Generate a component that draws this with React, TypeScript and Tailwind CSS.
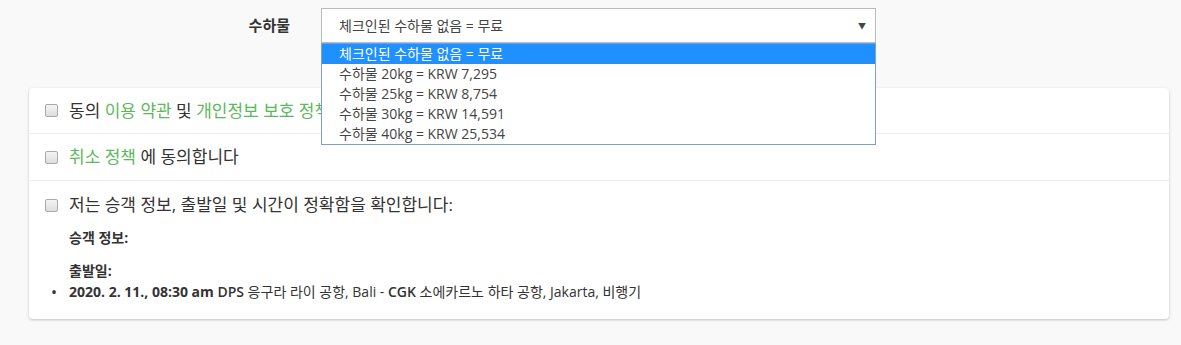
import React from "react";

const font = { fontFamily: '"Open Sans", "Noto Sans CJK KR", sans-serif' };

function Checkbox() {
  return (
    <span className="inline-block w-[13px] h-[13px] rounded-[2px] border border-[#a9a9a9] bg-gradient-to-b from-[#f4f4f4] to-[#dedede] shrink-0" />
  );
}

export default function App() {
  const options = [
    "수하물 20kg = KRW 7,295",
    "수하물 25kg = KRW 8,754",
    "수하물 30kg = KRW 14,591",
    "수하물 40kg = KRW 25,534",
  ];
  return (
    <div className="w-[1181px] h-[345px] bg-[#f9f9f9] text-[#333] overflow-hidden" style={font}>
      <div className="flex items-center pt-[8px] h-[43px]">
        <div className="w-[321px] pr-[31px] text-right text-[15px] font-bold text-[#333]">수하물</div>
        <div className="relative">
          <div className="w-[555px] h-[35px] border border-[#bbb] bg-white flex items-center pl-[17px] pr-[9px] text-[14px] text-[#444]">
            <span className="flex-1">체크인된 수하물 없음 = 무료</span>
            <span className="text-[8px] text-[#444]">▼</span>
          </div>
          <div className="absolute left-0 top-full z-10 w-[555px] border border-[#7f9dcf] bg-white text-[14px] text-[#444] leading-[20px]">
            <div className="bg-[#1e90ff] text-white pl-[17px] h-[20px]">체크인된 수하물 없음 = 무료</div>
            {options.map((o) => (
              <div key={o} className="pl-[17px] h-[20px]">{o}</div>
            ))}
          </div>
        </div>
      </div>
      <div className="mt-[45px] ml-[29px] w-[1140px] bg-white rounded-[4px] shadow-[0_1px_3px_rgba(0,0,0,0.22)]">
        <div className="h-[46px] flex items-center pl-[16px] gap-[11px] border-b border-[#eee] text-[17px]">
          <Checkbox />
          <span>
            동의 <span className="text-[#5cb85c]">이용 약관</span> 및 <span className="text-[#5cb85c]">개인정보 보호 정책</span>
          </span>
        </div>
        <div className="h-[47px] flex items-center pl-[16px] gap-[11px] border-b border-[#eee] text-[17px]">
          <Checkbox />
          <span>
            <span className="text-[#5cb85c]">취소 정책</span> 에 동의합니다
          </span>
        </div>
        <div className="pt-[12px] pb-[17px]">
          <div className="flex items-center pl-[16px] gap-[11px] text-[17px] h-[24px]">
            <Checkbox />
            <span>저는 승객 정보, 출발일 및 시간이 정확함을 확인합니다:</span>
          </div>
          <div className="pl-[40px] text-[14px] font-bold mt-[11px] h-[20px] leading-[20px]">승객 정보:</div>
          <div className="pl-[40px] text-[14px] font-bold mt-[13px] h-[20px] leading-[20px]">출발일:</div>
          <div className="flex items-center text-[14px] h-[20px] leading-[20px] mt-[1px]">
            <span className="w-[40px] pl-[22px] text-[16px]">•</span>
            <span>
              <b>2020. 2. 11., 08:30 am</b> <b className="font-semibold">DPS</b> 응구라 라이 공항, Bali - <b className="font-semibold">CGK</b> 소에카르노 하타 공항, Jakarta, 비행기
            </span>
          </div>
        </div>
      </div>
    </div>
  );
}
